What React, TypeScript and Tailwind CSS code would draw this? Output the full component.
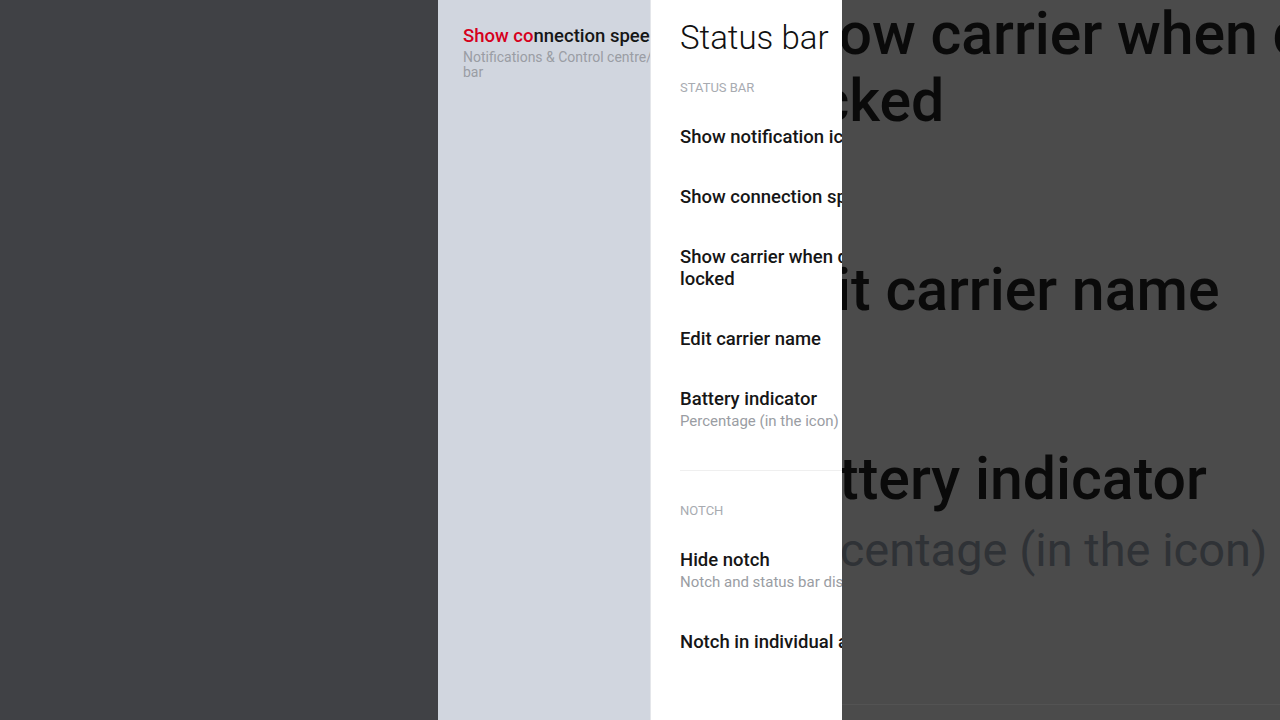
import React from "react";

const font = { fontFamily: "Roboto, 'Noto Sans', Arial, sans-serif" };

function Item({ lines, sub }: { lines: string[]; sub?: string }) {
  return (
    <div className="py-[19px]">
      {lines.map((l, i) => (
        <div key={i} className="whitespace-nowrap text-[18.5px] leading-[22px] font-medium text-[#161616]">
          {l}
        </div>
      ))}
      {sub && (
        <div className="whitespace-nowrap text-[15px] leading-[22px] text-[#9a9da3]">{sub}</div>
      )}
    </div>
  );
}

function Header({ children }: { children: React.ReactNode }) {
  return (
    <div className="text-[13px] leading-[16px] uppercase text-[#a8abb1] mb-[11px] whitespace-nowrap">
      {children}
    </div>
  );
}

export default function App() {
  return (
    <div className="flex h-[720px] w-[1280px] overflow-hidden" style={font}>
      <div className="w-[438px] shrink-0 bg-[#404145]" />

      <div className="w-[212px] shrink-0 overflow-hidden bg-[#d1d6df] pl-[25px] pt-[25px]">
        <div className="w-[260px]">
          <div className="whitespace-nowrap text-[18.5px] leading-[22px] font-medium text-[#161616]">
            <span className="text-[#d6001c]">Show co</span>nnection speed
          </div>
          <div className="text-[14px] leading-[15px] text-[#9a9da4] mt-[3px]">
            <div className="whitespace-nowrap">Notifications &amp; Control centre/Status</div>
            <div>bar</div>
          </div>
        </div>
      </div>

      <div className="w-[192px] shrink-0 overflow-hidden bg-white border-l border-[#e4e6ea] pl-[29px] pt-[18px]">
        <div className="w-[320px]">
          <div className="text-[33px] leading-[40px] font-light text-[#111111] whitespace-nowrap">Status bar</div>
          <div className="mt-[22px]">
            <Header>Status bar</Header>
          </div>
          <Item lines={["Show notification icons"]} />
          <Item lines={["Show connection speed"]} />
          <Item lines={["Show carrier when device is", "locked"]} />
          <Item lines={["Edit carrier name"]} />
          <Item lines={["Battery indicator"]} sub="Percentage (in the icon)" />
          <div className="h-px bg-[#efefef] mt-[19px] mb-[32px]" />
          <Header>Notch</Header>
          <Item lines={["Hide notch"]} sub="Notch and status bar display" />
          <Item lines={["Notch in individual apps"]} />
        </div>
      </div>

      <div className="flex-1 overflow-hidden bg-[#4b4b4b]">
        <div className="ml-[-72px] w-[800px]">
          <div className="text-[59px] leading-[67px] font-medium text-[#0a0a0a] whitespace-nowrap">
            <div>Show carrier when device is</div>
            <div>locked</div>
          </div>
          <div className="mt-[122px] text-[59px] leading-[67px] font-medium text-[#0a0a0a] whitespace-nowrap">
            Edit carrier name
          </div>
          <div className="mt-[122px] text-[59px] leading-[67px] font-medium text-[#0a0a0a] whitespace-nowrap">
            Battery indicator
          </div>
          <div className="mt-[13px] text-[47px] leading-[50px] text-[#2f3236] whitespace-nowrap">
            Percentage (in the icon)
          </div>
          <div className="mt-[129px] h-px bg-[#535353]" />
        </div>
      </div>
    </div>
  );
}
